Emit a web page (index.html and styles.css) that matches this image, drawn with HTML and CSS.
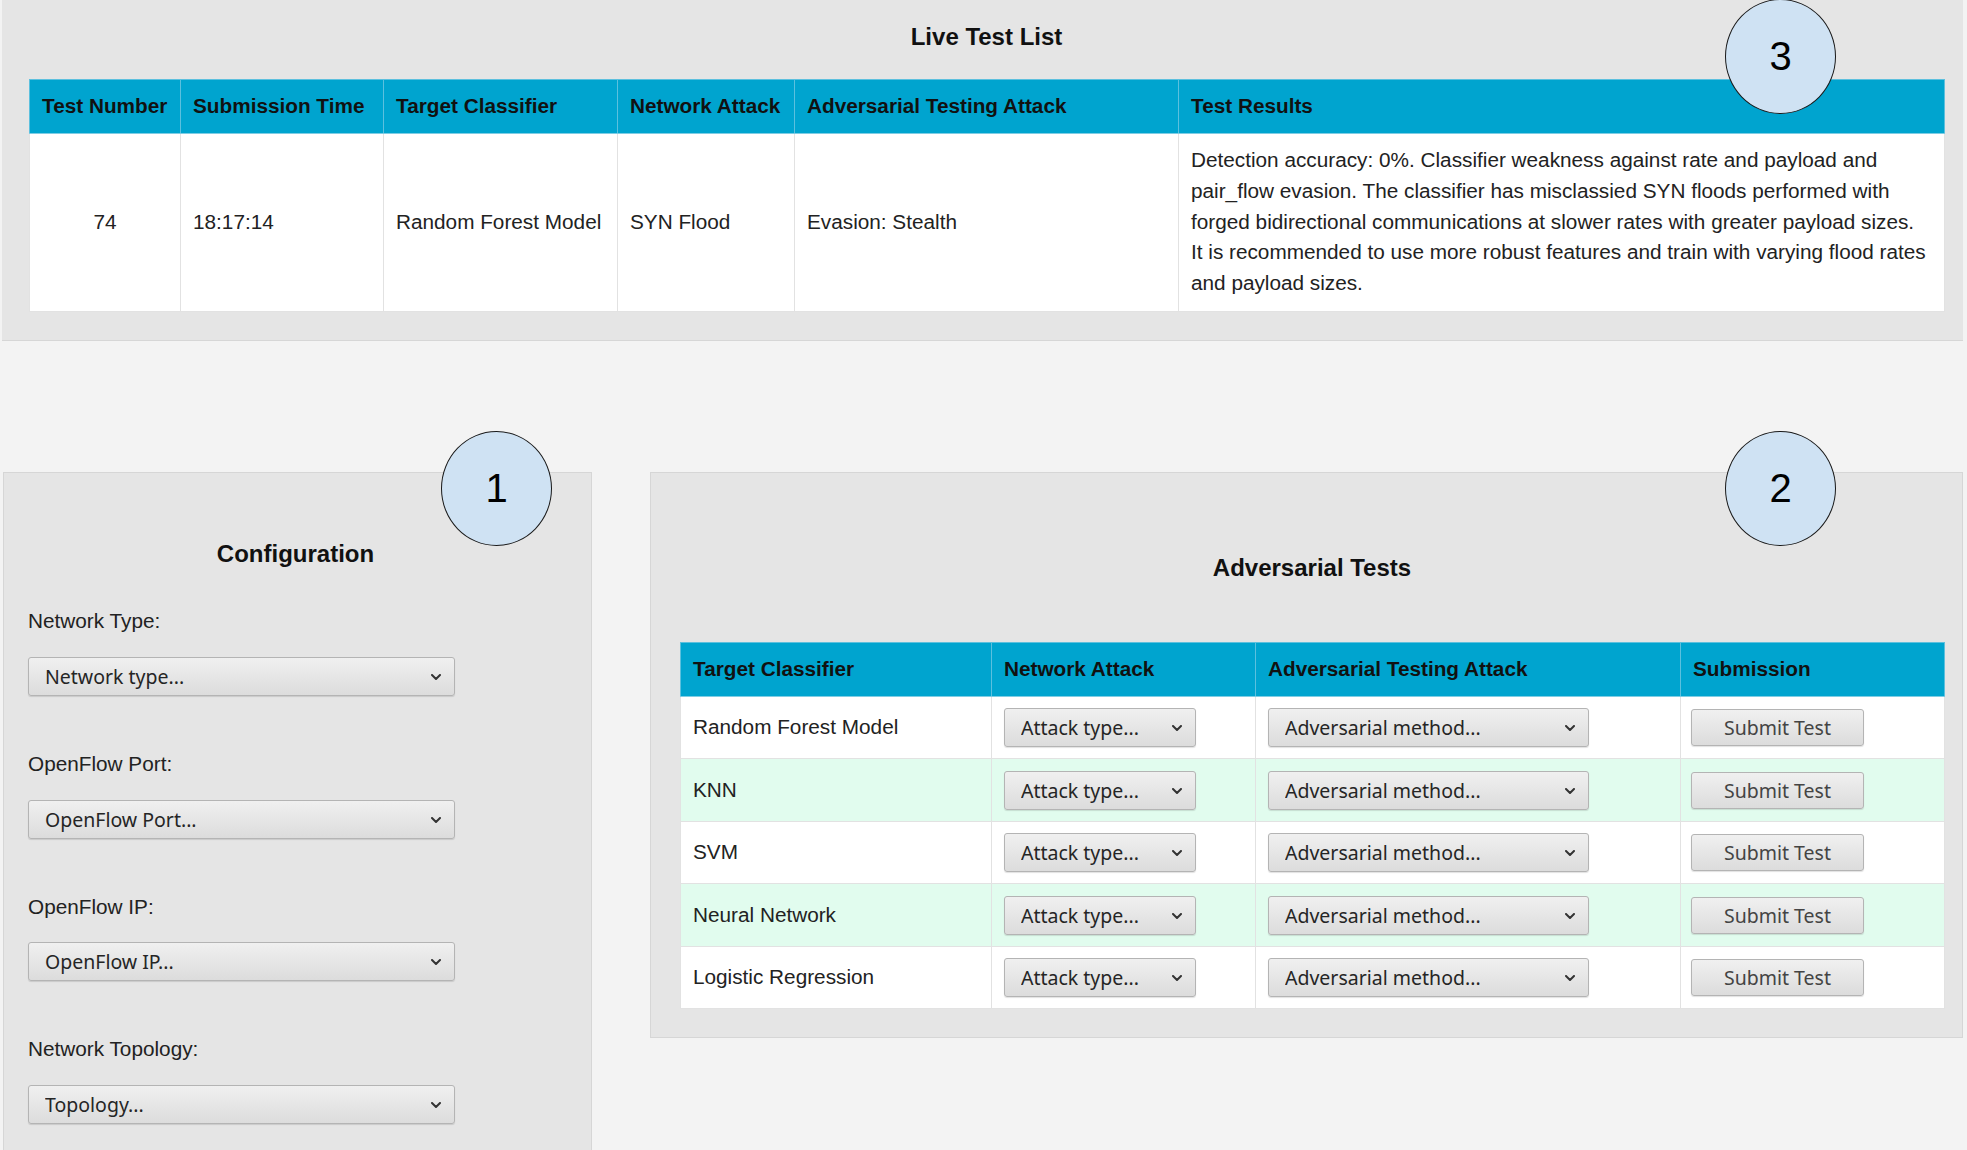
FILE: index.html
```html
<!DOCTYPE html>
<html lang="en">
<head>
<meta charset="utf-8">
<title>Adversarial Testing Dashboard</title>
<link rel="stylesheet" href="styles.css">
</head>
<body>
<div class="page">
  <section class="live-panel">
    <h2 class="panel-title">Live Test List</h2>
    <table class="live-table">
      <colgroup>
        <col class="lc-num"><col class="lc-time"><col class="lc-clf"><col class="lc-net"><col class="lc-adv"><col class="lc-res">
      </colgroup>
      <thead>
        <tr>
          <th>Test Number</th>
          <th>Submission Time</th>
          <th>Target Classifier</th>
          <th>Network Attack</th>
          <th>Adversarial Testing Attack</th>
          <th>Test Results</th>
        </tr>
      </thead>
      <tbody>
        <tr>
          <td class="center">74</td>
          <td>18:17:14</td>
          <td>Random Forest Model</td>
          <td>SYN Flood</td>
          <td>Evasion: Stealth</td>
          <td class="results">Detection accuracy: 0%. Classifier weakness against rate and payload and<br>pair_flow evasion. The classifier has misclassied SYN floods performed with<br>forged bidirectional communications at slower rates with greater payload sizes.<br>It is recommended to use more robust features and train with varying flood rates<br>and payload sizes.</td>
        </tr>
      </tbody>
    </table>
  </section>

  <div class="lower">
    <section class="config-panel">
      <h2 class="panel-title">Configuration</h2>
      <div class="field">
        <label class="field-label" for="nettype">Network Type:</label>
        <div class="select wide">
          <select id="nettype"><option>Network type...</option></select>
          <svg class="chev" viewBox="0 0 10 6" width="10" height="6"><polyline points="1,1 5,5 9,1"/></svg>
        </div>
      </div>
      <div class="field">
        <label class="field-label" for="ofport">OpenFlow Port:</label>
        <div class="select wide">
          <select id="ofport"><option>OpenFlow Port...</option></select>
          <svg class="chev" viewBox="0 0 10 6" width="10" height="6"><polyline points="1,1 5,5 9,1"/></svg>
        </div>
      </div>
      <div class="field">
        <label class="field-label" for="ofip">OpenFlow IP:</label>
        <div class="select wide">
          <select id="ofip"><option>OpenFlow IP...</option></select>
          <svg class="chev" viewBox="0 0 10 6" width="10" height="6"><polyline points="1,1 5,5 9,1"/></svg>
        </div>
      </div>
      <div class="field">
        <label class="field-label" for="topo">Network Topology:</label>
        <div class="select wide">
          <select id="topo"><option>Topology...</option></select>
          <svg class="chev" viewBox="0 0 10 6" width="10" height="6"><polyline points="1,1 5,5 9,1"/></svg>
        </div>
      </div>
    </section>

    <section class="adv-panel">
      <h2 class="panel-title">Adversarial Tests</h2>
      <table class="adv-table">
        <colgroup>
          <col class="ac-clf"><col class="ac-net"><col class="ac-adv"><col class="ac-sub">
        </colgroup>
        <thead>
          <tr>
            <th>Target Classifier</th>
            <th>Network Attack</th>
            <th>Adversarial Testing Attack</th>
            <th>Submission</th>
          </tr>
        </thead>
        <tbody>
          <tr>
            <td>Random Forest Model</td>
            <td><div class="select attack"><select><option>Attack type...</option></select><svg class="chev" viewBox="0 0 10 6" width="10" height="6"><polyline points="1,1 5,5 9,1"/></svg></div></td>
            <td><div class="select method"><select><option>Adversarial method...</option></select><svg class="chev" viewBox="0 0 10 6" width="10" height="6"><polyline points="1,1 5,5 9,1"/></svg></div></td>
            <td><button class="submit" type="button">Submit Test</button></td>
          </tr>
          <tr class="alt">
            <td>KNN</td>
            <td><div class="select attack"><select><option>Attack type...</option></select><svg class="chev" viewBox="0 0 10 6" width="10" height="6"><polyline points="1,1 5,5 9,1"/></svg></div></td>
            <td><div class="select method"><select><option>Adversarial method...</option></select><svg class="chev" viewBox="0 0 10 6" width="10" height="6"><polyline points="1,1 5,5 9,1"/></svg></div></td>
            <td><button class="submit" type="button">Submit Test</button></td>
          </tr>
          <tr>
            <td>SVM</td>
            <td><div class="select attack"><select><option>Attack type...</option></select><svg class="chev" viewBox="0 0 10 6" width="10" height="6"><polyline points="1,1 5,5 9,1"/></svg></div></td>
            <td><div class="select method"><select><option>Adversarial method...</option></select><svg class="chev" viewBox="0 0 10 6" width="10" height="6"><polyline points="1,1 5,5 9,1"/></svg></div></td>
            <td><button class="submit" type="button">Submit Test</button></td>
          </tr>
          <tr class="alt">
            <td>Neural Network</td>
            <td><div class="select attack"><select><option>Attack type...</option></select><svg class="chev" viewBox="0 0 10 6" width="10" height="6"><polyline points="1,1 5,5 9,1"/></svg></div></td>
            <td><div class="select method"><select><option>Adversarial method...</option></select><svg class="chev" viewBox="0 0 10 6" width="10" height="6"><polyline points="1,1 5,5 9,1"/></svg></div></td>
            <td><button class="submit" type="button">Submit Test</button></td>
          </tr>
          <tr>
            <td>Logistic Regression</td>
            <td><div class="select attack"><select><option>Attack type...</option></select><svg class="chev" viewBox="0 0 10 6" width="10" height="6"><polyline points="1,1 5,5 9,1"/></svg></div></td>
            <td><div class="select method"><select><option>Adversarial method...</option></select><svg class="chev" viewBox="0 0 10 6" width="10" height="6"><polyline points="1,1 5,5 9,1"/></svg></div></td>
            <td><button class="submit" type="button">Submit Test</button></td>
          </tr>
        </tbody>
      </table>
    </section>
  </div>

  <div class="marker m1">1</div>
  <div class="marker m2">2</div>
  <div class="marker m3">3</div>
</div>
</body>
</html>
```

FILE: styles.css
```css
html, body {
  margin: 0;
  padding: 0;
  height: 1150px;
  overflow: hidden;
}

body {
  background: #f3f3f3;
  font-family: "Liberation Sans", Arial, sans-serif;
  font-size: 20.75px;
  line-height: 30.7px;
  color: #222;
}

.page {
  position: relative;
  width: 1967px;
}

.panel-title {
  margin: 0;
  font-size: 24px;
  line-height: 28px;
  font-weight: bold;
  color: #111;
  text-align: center;
}

/* ---------- Live test list ---------- */
.live-panel {
  box-sizing: border-box;
  margin-left: 2px;
  width: 1961px;
  padding: 23px 19px 28px 27px;
  background: #e5e5e5;
  border-bottom: 1px solid #d6d6d6;
}

.live-panel .panel-title {
  margin-bottom: 28px;
}

table {
  border-collapse: collapse;
  table-layout: fixed;
  background: #fff;
}

th, td {
  border: 1px solid #e2e2e2;
  padding: 11px 12px;
  text-align: left;
  vertical-align: middle;
}

th {
  background: #00a4cf;
  color: #111;
  font-weight: bold;
  border-color: #5cc0de;
  border-bottom: 1px solid #7fcde4;
}

td.center {
  text-align: center;
}

td.results {
  padding-top: 11.5px;
  padding-bottom: 12.5px;
  white-space: nowrap;
}

.live-table {
  width: 1915px;
}

.lc-num { width: 151px; }
.lc-time { width: 203px; }
.lc-clf { width: 234px; }
.lc-net { width: 177px; }
.lc-adv { width: 384px; }
.lc-res { width: 766px; }

/* ---------- Lower section ---------- */
.lower {
  display: flex;
  align-items: flex-start;
  gap: 58px;
  margin-top: 131px;
}

.config-panel {
  box-sizing: border-box;
  margin-left: 3px;
  width: 589px;
  height: 720px;
  padding: 67px 24px 0 24px;
  background: #e5e5e5;
  border: 1px solid #d6d6d6;
}

.config-panel .panel-title {
  margin-bottom: 38px;
  padding-right: 4px;
}

.field {
  margin-bottom: 53px;
}

.field-label {
  display: block;
  margin-bottom: 20px;
  color: #222;
}

/* ---------- Select & buttons ---------- */
.select {
  position: relative;
  height: 39px;
}

.select.wide { width: 427px; }
.select.attack { width: 192px; }
.select.method { width: 321px; }

.select select,
.submit {
  -webkit-appearance: none;
  appearance: none;
  box-sizing: border-box;
  width: 100%;
  height: 100%;
  margin: 0;
  border: 1px solid #b4b4b4;
  border-radius: 3px;
  background: linear-gradient(#f0f0f0, #dcdcdc);
  box-shadow: 0 1px 1px rgba(0, 0, 0, 0.12);
  font-family: "Noto Sans", "Open Sans", sans-serif;
  font-size: 19.5px;
  color: #252525;
  outline: none;
}

.select select {
  padding: 0 32px 0 16px;
}

.chev {
  position: absolute;
  right: 14px;
  top: 17px;
  fill: none;
  stroke: #333;
  stroke-width: 2;
  stroke-linecap: round;
  stroke-linejoin: round;
  pointer-events: none;
}

.submit {
  display: block;
  width: 173px;
  height: 37px;
  padding: 0;
  color: #444;
  text-align: center;
}

/* ---------- Adversarial tests ---------- */
.adv-panel {
  box-sizing: border-box;
  width: 1313px;
  padding: 81px 18px 28px 29px;
  background: #e5e5e5;
  border: 1px solid #d6d6d6;
}

.adv-panel .panel-title {
  margin-bottom: 60px;
}

.adv-table {
  width: 1264px;
}

.adv-table td {
  padding-top: 11.25px;
  padding-bottom: 11.25px;
}

.adv-table td:last-child {
  padding-left: 10px;
}

.adv-table tr.alt td {
  background: #e1fcee;
}

.ac-clf { width: 311px; }
.ac-net { width: 264px; }
.ac-adv { width: 425px; }
.ac-sub { width: 264px; }

/* ---------- Annotation markers ---------- */
.marker {
  position: absolute;
  box-sizing: border-box;
  width: 111px;
  height: 115px;
  border: 1.3px solid #1a1a1a;
  border-radius: 50%;
  background: #cfe2f3;
  font-family: "Liberation Sans", Arial, sans-serif;
  font-size: 40px;
  line-height: 113px;
  text-align: center;
  color: #000;
}

.m1 { left: 441px; top: 431px; }
.m2 { left: 1725px; top: 431px; }
.m3 { left: 1725px; top: -1px; }
```
